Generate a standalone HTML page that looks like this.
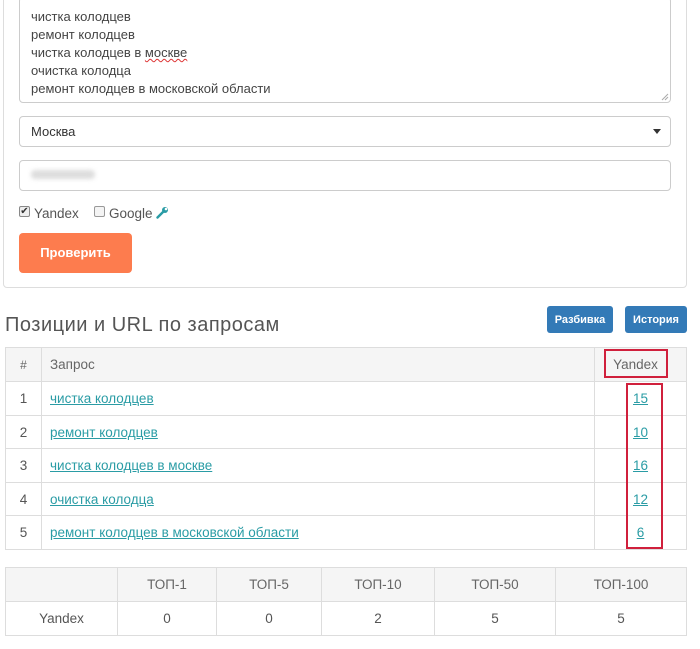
<!DOCTYPE html>
<html><head><meta charset="utf-8"><style>
*{box-sizing:border-box;margin:0;padding:0}
body{width:700px;height:649px;background:#fff;font-family:"Liberation Sans",sans-serif;color:#555;position:relative;overflow:hidden;font-size:13px}
.a{position:absolute}
.panel{left:3px;top:-5px;width:684px;height:293px;border:1px solid #ddd;border-radius:4px}
.field{border:1px solid #ccc;border-radius:4px;left:19px;width:652px;background:#fff}
.ta{top:-3px;height:106px;padding:10px 11px;line-height:18px;font-size:13px;color:#444}
.sq{text-decoration:underline wavy #d33;text-decoration-thickness:1px}
.btn{color:#fff;border-radius:3px;background:#337ab7;font-size:11px;font-weight:bold;display:flex;align-items:center;justify-content:center}
table{border-collapse:collapse;position:absolute;left:5px;width:682px}
td,th{border:1px solid #ddd;font-size:13.5px}
th{background:#f5f5f5;font-weight:normal;color:#666}
a{color:#2a9ca5;text-decoration:underline}
.n{text-align:center}
</style></head><body>
<div class="a panel"></div>
<div class="a field ta">чистка колодцев<br>ремонт колодцев<br>чистка колодцев в <span class="sq">москве</span><br>очистка колодца<br>ремонт колодцев в московской области</div>
<svg class="a" style="left:661px;top:93px" width="8" height="8"><path d="M1 7L7 1M4 7L7 4" stroke="#aaa"/></svg>
<div class="a field" style="top:116px;height:31px;padding:7px 11px;font-size:13px;color:#333">Москва</div>
<div class="a" style="left:653px;top:129px;width:0;height:0;border-left:4px solid transparent;border-right:4px solid transparent;border-top:5px solid #333"></div>
<div class="a field" style="top:160px;height:31px"></div>
<div class="a" style="left:31px;top:170px;width:64px;height:9px;background:#ddd;border-radius:4px;filter:blur(2px)"></div>
<div class="a" style="left:19px;top:206px;width:11px;height:11px;border:1px solid #888;border-radius:2px;background:#eee;font-size:10px;line-height:9px;color:#333;text-align:center">✔</div>
<div class="a" style="left:34px;top:206px;font-size:13.5px;color:#555">Yandex</div>
<div class="a" style="left:94px;top:206px;width:11px;height:11px;border:1px solid #999;border-radius:2px;background:#f4f4f4"></div>
<div class="a" style="left:109px;top:206px;font-size:13.5px;color:#555">Google</div>
<svg class="a" style="left:156px;top:206px" width="13" height="13" viewBox="0 0 13 13"><path d="M1.5 11.5L7 6" stroke="#2a9ca5" stroke-width="2.4" stroke-linecap="round"/><circle cx="9" cy="4" r="3" fill="#2a9ca5"/><circle cx="10" cy="3" r="1.3" fill="#fff"/></svg>
<div class="a" style="left:19px;top:233px;width:113px;height:40px;background:#fd7c4e;border-radius:4px;color:#fff;font-weight:bold;font-size:13px;text-align:center;line-height:40px">Проверить</div>
<div class="a" style="left:5px;top:314px;font-size:20px;color:#555;letter-spacing:0.5px">Позиции и URL по запросам</div>
<div class="a btn" style="left:547px;top:306px;width:66px;height:27px">Разбивка</div>
<div class="a btn" style="left:625px;top:306px;width:62px;height:27px">История</div>
<table style="top:347px">
<tr style="height:34px"><th style="width:36px;font-size:12px">#</th><th style="text-align:left;padding-left:8px">Запрос</th><th style="width:92px;padding-right:10px">Yandex</th></tr>
<tr style="height:34px"><td class="n">1</td><td style="padding-left:8px"><a>чистка колодцев</a></td><td class="n"><a>15</a></td></tr>
<tr style="height:33px"><td class="n">2</td><td style="padding-left:8px"><a>ремонт колодцев</a></td><td class="n"><a>10</a></td></tr>
<tr style="height:34px"><td class="n">3</td><td style="padding-left:8px"><a>чистка колодцев в москве</a></td><td class="n"><a>16</a></td></tr>
<tr style="height:33px"><td class="n">4</td><td style="padding-left:8px"><a>очистка колодца</a></td><td class="n"><a>12</a></td></tr>
<tr style="height:34px"><td class="n">5</td><td style="padding-left:8px"><a>ремонт колодцев в московской области</a></td><td class="n"><a>6</a></td></tr>
</table>
<div class="a" style="left:604px;top:349px;width:64px;height:29px;border:2px solid #d0203c"></div>
<div class="a" style="left:626px;top:383px;width:37px;height:166px;border:2px solid #d0203c"></div>
<table style="top:567px;text-align:center">
<tr style="height:34px"><th style="width:112px"></th><th style="width:99px">ТОП-1</th><th style="width:105px">ТОП-5</th><th style="width:113px">ТОП-10</th><th style="width:121px">ТОП-50</th><th>ТОП-100</th></tr>
<tr style="height:34px"><td>Yandex</td><td>0</td><td>0</td><td>2</td><td>5</td><td>5</td></tr>
</table>
</body></html>
